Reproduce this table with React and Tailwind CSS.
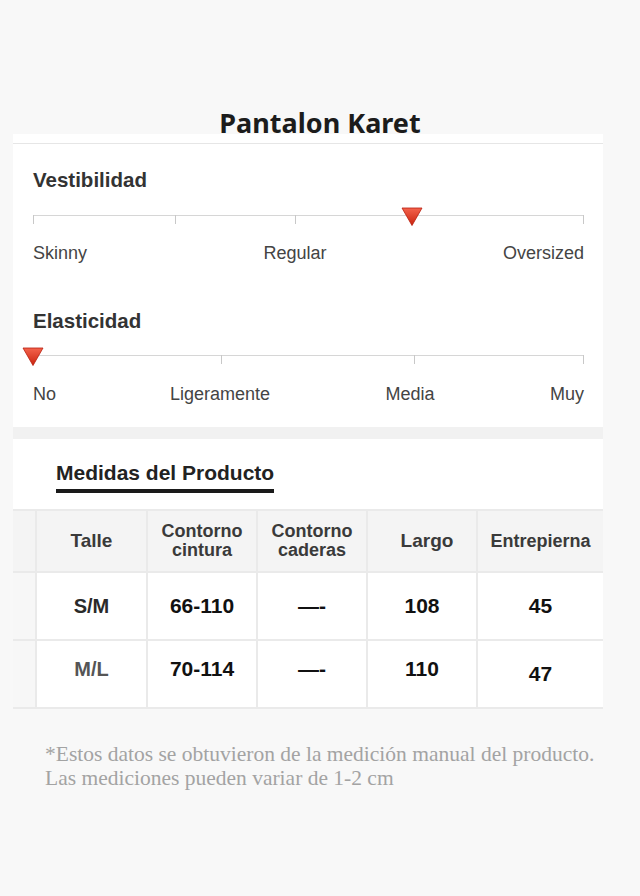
const sans = { fontFamily: '"Liberation Sans", Arial, sans-serif' };

function Triangle() {
  return (
    <svg width="22" height="19" viewBox="0 0 22 19" className="block">
      <defs>
        <linearGradient id="tri" x1="0" y1="0" x2="0" y2="1">
          <stop offset="0" stopColor="#f4634c" />
          <stop offset="1" stopColor="#c9230f" />
        </linearGradient>
      </defs>
      <polygon points="1,1 21,1 11,18.5" fill="url(#tri)" stroke="#b81d0c" strokeWidth="0.8" strokeLinejoin="round" />
    </svg>
  );
}

function Scale({ ticks, marker }) {
  return (
    <div className="relative h-px bg-[#d6d6d6]">
      {ticks.map((t) => (
        <div key={t} className="absolute top-0 w-px h-[9px] bg-[#c8c8c8]" style={{ left: t }} />
      ))}
      <div className="absolute top-[-8px]" style={{ left: marker - 11 }}>
        <Triangle />
      </div>
    </div>
  );
}

const cols = "grid grid-cols-[22px_109px_108px_108px_108px_125px] gap-[2px]";

function HeadCell({ children, className = "" }) {
  return (
    <div className={`bg-[#f4f4f4] h-[60px] flex items-center justify-center text-center font-bold text-[#3a3a3a] ${className}`}>
      {children}
    </div>
  );
}

function Cell({ children, className = "" }) {
  return (
    <div className={`bg-white h-[66px] flex items-center justify-center font-bold ${className}`}>
      {children}
    </div>
  );
}

const rows = [
  { size: "S/M", cint: "66-110", cad: "—-", largo: "108", ent: "45", sizeColor: "text-[#2a2a2a]", pb: "" },
  { size: "M/L", cint: "70-114", cad: "—-", largo: "110", ent: "47", sizeColor: "text-[#555]", pb: "pb-[10px]" },
];

export default function App() {
  return (
    <div className="min-h-[896px] bg-[#f8f8f8] pt-[112px] pb-[60px]">
      <h1
        className="text-center text-[27px] leading-[22px] font-bold text-[#1c1c1c]"
        style={{ fontFamily: '"Noto Sans", "Open Sans", sans-serif' }}
      >
        Pantalon Karet
      </h1>

      <div className="ml-[13px] w-[590px]" style={sans}>
        {/* fit + stretch card */}
        <div className="bg-white pt-[9px] pb-[23px]">
          <div className="h-px bg-[#e6e6e6]" />
          <div className="pl-[20px] pr-[19px]">
            <h2 className="mt-[24px] text-[20.5px] leading-[24px] font-bold text-[#333]">Vestibilidad</h2>
            <div className="mt-[23px]">
              <Scale ticks={[0, 142, 262, 550]} marker={379} />
            </div>
            <div className="mt-[27px] flex text-[18px] leading-[20px] text-[#444]">
              <span className="w-[212px]">Skinny</span>
              <span className="w-[100px] text-center">Regular</span>
              <span className="flex-1 text-right">Oversized</span>
            </div>

            <h2 className="mt-[46px] text-[20.5px] leading-[24px] font-bold text-[#333]">Elasticidad</h2>
            <div className="mt-[22px]">
              <Scale ticks={[188, 381, 550]} marker={0} />
            </div>
            <div className="mt-[28px] flex text-[18px] leading-[20px] text-[#444]">
              <span className="w-[137px]">No</span>
              <span className="w-[100px] text-center">Ligeramente</span>
              <span className="ml-[100px] w-[80px] text-center">Media</span>
              <span className="flex-1 text-right">Muy</span>
            </div>
          </div>
        </div>

        <div className="h-[12px] bg-[#f1f1f1]" />

        <div className="bg-white pt-[22px] pb-[16px]">
          <div className="ml-[43px] inline-block">
            <h3 className="text-[21px] leading-[24px] font-bold text-[#222]">Medidas del Producto</h3>
            <div className="mt-[4px] h-[4px] bg-[#1a1a1a]" />
          </div>
        </div>

        {/* size table */}
        <div className={`${cols} bg-[#eaeaea] pt-[2px] pr-[2px] pb-[2px]`}>
          <div className="bg-[#f4f4f4]" />
          <HeadCell className="text-[19px]">Talle</HeadCell>
          <HeadCell className="text-[18px] leading-[19px]">Contorno<br />cintura</HeadCell>
          <HeadCell className="text-[18px] leading-[19px]">Contorno<br />caderas</HeadCell>
          <HeadCell className="text-[19px] pl-[10px]">Largo</HeadCell>
          <HeadCell className="text-[18px]">Entrepierna</HeadCell>

          {rows.map((r) => (
            <div key={r.size} className="contents">
              <div className="bg-[#f7f7f7]" />
              <Cell className={`text-[20px] ${r.sizeColor} ${r.pb}`}>{r.size}</Cell>
              <Cell className={`text-[21px] text-[#111] ${r.pb}`}>{r.cint}</Cell>
              <Cell className={`text-[21px] text-[#111] ${r.pb}`}>{r.cad}</Cell>
              <Cell className={`text-[21px] text-[#111] ${r.pb}`}>{r.largo}</Cell>
              <Cell className="text-[21px] text-[#111]">{r.ent}</Cell>
            </div>
          ))}
        </div>

        <p
          className="mt-[33px] ml-[32px] text-[21.5px] leading-[24px] text-[#a3a3a3] whitespace-nowrap"
          style={{ fontFamily: '"Liberation Serif", "Times New Roman", serif' }}
        >
          *Estos datos se obtuvieron de la medición manual del producto.
          <br />
          Las mediciones pueden variar de 1-2 cm
        </p>
      </div>
    </div>
  );
}
